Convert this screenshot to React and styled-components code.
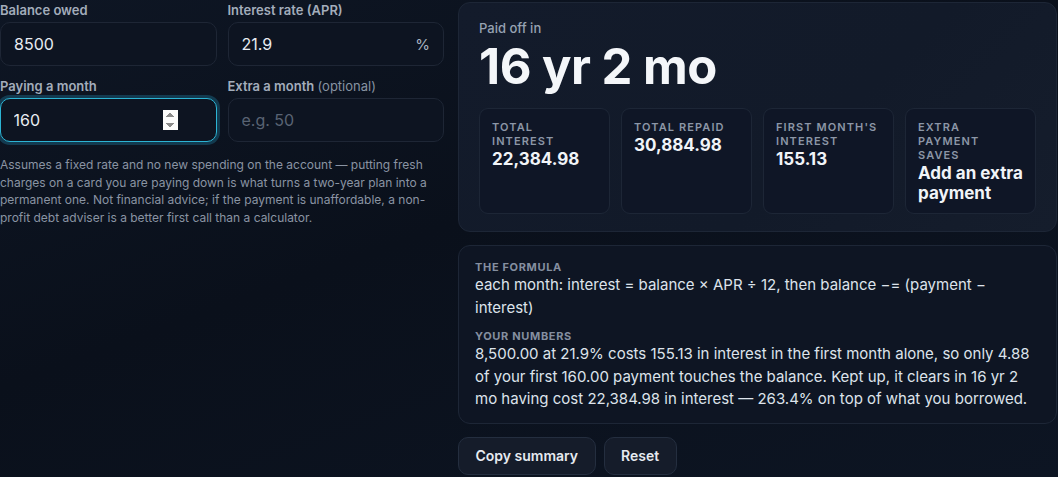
import React, { useState } from "react";
import styled, { createGlobalStyle } from "styled-components";

const GlobalStyle = createGlobalStyle`
  * { box-sizing: border-box; }
  html, body {
    margin: 0;
    padding: 0;
    background: #0b111d;
  }
  body {
    min-height: 100vh;
    font-family: Inter, "Noto Sans", "Liberation Sans", sans-serif;
    color: #e5e9f0;
    background: linear-gradient(160deg, #0e1624 0%, #0a101b 45%, #0d1523 100%);
  }
`;

const Page = styled.div`
  display: grid;
  grid-template-columns: 444px 1fr;
  column-gap: 14px;
  align-items: start;
  padding: 2px 1px 0 0;
`;

const Form = styled.div`
  display: flex;
  flex-direction: column;
`;

const Fields = styled.div`
  display: grid;
  grid-template-columns: 1fr 1fr;
  column-gap: 11px;
  row-gap: 12px;
`;

const Field = styled.label`
  display: flex;
  flex-direction: column;
  gap: 4px;
`;

const LabelText = styled.span`
  font-size: 13px;
  line-height: 16px;
  font-weight: 600;
  color: #a3adbb;

  & > em {
    font-style: normal;
    font-weight: 400;
    color: #8792a2;
  }
`;

const InputWrap = styled.div`
  position: relative;
  display: flex;
  align-items: center;
`;

const Input = styled.input`
  width: 100%;
  height: 44px;
  padding: 0 38px 0 13px;
  border-radius: 10px;
  border: 1px solid #1e2635;
  background: #0d1421;
  color: #e8ecf2;
  font-family: inherit;
  font-size: 16px;
  outline: none;

  &::placeholder {
    color: #596373;
  }

  &:focus {
    border: 1.5px solid #2cb4d4;
    padding-left: 12.5px;
    box-shadow: 0 0 0 3px rgba(33, 150, 190, 0.3);
  }
`;

const Suffix = styled.span`
  position: absolute;
  right: 14px;
  font-size: 15px;
  color: #aab3c0;
  pointer-events: none;
`;

const Note = styled.p`
  margin: 14px 0 0;
  font-size: 12px;
  line-height: 17.5px;
  color: #8a94a3;
`;

const Results = styled.div`
  display: flex;
  flex-direction: column;
  gap: 13px;
`;

const Card = styled.section`
  border: 1px solid #1d2636;
  border-radius: 12px;
  background: ${(p) =>
    p.$hero
      ? "linear-gradient(135deg, #131b2b 0%, #121a29 60%, #151d2c 100%)"
      : "#0e1523"};
  padding: ${(p) => (p.$hero ? "17px 20px 17px 20px" : "14px 16px 12px 16px")};
`;

const Kicker = styled.div`
  font-size: 13px;
  line-height: 16px;
  font-weight: 500;
  color: #97a2b2;
`;

const Big = styled.div`
  margin-top: 3px;
  font-size: 49px;
  line-height: 55px;
  font-weight: 700;
  letter-spacing: -0.5px;
  color: #f4f6f9;
`;

const Stats = styled.div`
  margin-top: 14px;
  display: grid;
  grid-template-columns: repeat(4, 1fr);
  gap: 11px;
`;

const Stat = styled.div`
  border: 1px solid #1d2636;
  border-radius: 9px;
  background: #0f1626;
  padding: 11px 12px 10px;
  min-height: 105px;
`;

const StatLabel = styled.div`
  font-size: 11px;
  line-height: 14px;
  font-weight: 600;
  letter-spacing: 0.1em;
  text-transform: uppercase;
  color: #8c96a7;
`;

const StatValue = styled.div`
  margin-top: 1px;
  font-size: 17px;
  line-height: 20px;
  font-weight: 700;
  color: #f1f4f8;
`;

const SectionLabel = styled.div`
  margin-top: ${(p) => (p.$first ? "0" : "10px")};
  font-size: 11px;
  line-height: 14px;
  font-weight: 700;
  letter-spacing: 0.06em;
  text-transform: uppercase;
  color: #858fa0;
`;

const Body = styled.p`
  margin: 0;
  font-size: 15px;
  line-height: 22.5px;
  color: #dde3eb;
`;

const Actions = styled.div`
  display: flex;
  gap: 8px;
`;

const Button = styled.button`
  height: 38px;
  padding: 0 16.5px;
  border-radius: 10px;
  border: 1px solid #242e3f;
  background: #151c2a;
  color: #e6eaf0;
  font-family: inherit;
  font-size: 14px;
  font-weight: 600;
  cursor: pointer;
`;

const stats = [
  { label: "Total interest", value: "22,384.98" },
  { label: "Total repaid", value: "30,884.98" },
  { label: "First month's interest", value: "155.13" },
  { label: "Extra payment saves", value: "Add an extra payment" },
];

export default function App() {
  const [balance, setBalance] = useState("8500");
  const [rate, setRate] = useState("21.9");
  const [payment, setPayment] = useState("160");
  const [extra, setExtra] = useState("");

  return (
    <>
      <GlobalStyle />
      <Page>
        <Form>
          <Fields>
            <Field>
              <LabelText>Balance owed</LabelText>
              <InputWrap>
                <Input
                  inputMode="decimal"
                  value={balance}
                  onChange={(e) => setBalance(e.target.value)}
                />
              </InputWrap>
            </Field>
            <Field>
              <LabelText>Interest rate (APR)</LabelText>
              <InputWrap>
                <Input
                  inputMode="decimal"
                  value={rate}
                  onChange={(e) => setRate(e.target.value)}
                />
                <Suffix>%</Suffix>
              </InputWrap>
            </Field>
            <Field>
              <LabelText>Paying a month</LabelText>
              <InputWrap>
                <Input
                  type="number"
                  autoFocus
                  value={payment}
                  onChange={(e) => setPayment(e.target.value)}
                />
              </InputWrap>
            </Field>
            <Field>
              <LabelText>
                Extra a month <em>(optional)</em>
              </LabelText>
              <InputWrap>
                <Input
                  inputMode="decimal"
                  placeholder="e.g. 50"
                  value={extra}
                  onChange={(e) => setExtra(e.target.value)}
                />
              </InputWrap>
            </Field>
          </Fields>
          <Note>
            Assumes a fixed rate and no new spending on the account — putting
            fresh charges on a card you are paying down is what turns a
            two-year plan into a permanent one. Not financial advice; if the
            payment is unaffordable, a non-profit debt adviser is a better
            first call than a calculator.
          </Note>
        </Form>

        <Results>
          <Card $hero>
            <Kicker>Paid off in</Kicker>
            <Big>16 yr 2 mo</Big>
            <Stats>
              {stats.map((s) => (
                <Stat key={s.label}>
                  <StatLabel>{s.label}</StatLabel>
                  <StatValue>{s.value}</StatValue>
                </Stat>
              ))}
            </Stats>
          </Card>

          <Card>
            <SectionLabel $first>The formula</SectionLabel>
            <Body>
              each month: interest = balance × APR ÷ 12, then balance −=
              (payment − interest)
            </Body>
            <SectionLabel>Your numbers</SectionLabel>
            <Body>
              8,500.00 at 21.9% costs 155.13 in interest in the first month
              alone, so only 4.88 of your first 160.00 payment touches the
              balance. Kept up, it clears in 16 yr 2 mo having cost 22,384.98
              in interest — 263.4% on top of what you borrowed.
            </Body>
          </Card>

          <Actions>
            <Button>Copy summary</Button>
            <Button>Reset</Button>
          </Actions>
        </Results>
      </Page>
    </>
  );
}
